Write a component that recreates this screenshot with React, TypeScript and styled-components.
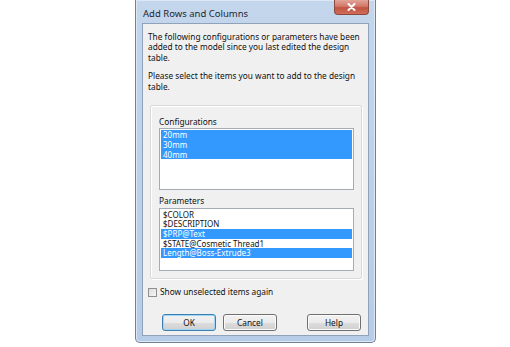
import styled, { createGlobalStyle } from 'styled-components';

const GlobalStyle = createGlobalStyle`
  html, body {
    margin: 0;
    padding: 0;
    background: #ffffff;
  }
  body {
    font-family: 'Noto Sans', 'Open Sans', sans-serif;
    color: #111111;
  }
`;

const configurations = [
  { label: '20mm', selected: true },
  { label: '30mm', selected: true },
  { label: '40mm', selected: true },
];

const parameters = [
  { label: '$COLOR', selected: false },
  { label: '$DESCRIPTION', selected: false },
  { label: '$PRP@Text', selected: true },
  { label: '$STATE@Cosmetic Thread1', selected: false },
  { label: 'Length@Boss-Extrude3', selected: true },
];

const App = () => {
  return (
    <Stage>
      <GlobalStyle />
      <Window>
        <TitleBar>
          <Title>Add Rows and Columns</Title>
          <CloseBtn type='button' aria-label='Close'>
            <svg width='9' height='8' viewBox='0 0 9 8'>
              <path d='M1.5 1 L7.5 7 M7.5 1 L1.5 7' stroke='#ffffff' strokeWidth='2' strokeLinecap='round' />
            </svg>
          </CloseBtn>
        </TitleBar>
        <Client>
          <Message>
            The following configurations or parameters have been added to the model since you last edited the design
            table.
          </Message>
          <Message>Please select the items you want to add to the design table.</Message>
          <GroupBox>
            <ListLabel>Configurations</ListLabel>
            <ListBox $height={62}>
              {configurations.map((item) => (
                <ListItem key={item.label} $selected={item.selected}>
                  {item.label}
                </ListItem>
              ))}
            </ListBox>
            <ListLabel>Parameters</ListLabel>
            <ListBox $height={63}>
              {parameters.map((item) => (
                <ListItem key={item.label} $selected={item.selected}>
                  {item.label}
                </ListItem>
              ))}
            </ListBox>
          </GroupBox>
          <CheckRow>
            <CheckBox />
            <span>Show unselected items again</span>
          </CheckRow>
          <ButtonRow>
            <DialogBtn type='button' $focused>
              OK
            </DialogBtn>
            <DialogBtn type='button'>Cancel</DialogBtn>
            <Spacer />
            <DialogBtn type='button'>Help</DialogBtn>
          </ButtonRow>
        </Client>
      </Window>
    </Stage>
  );
};

const Stage = styled.div`
  width: 510px;
  height: 347px;
  padding-left: 135px;
  box-sizing: border-box;
`;

const Window = styled.div`
  width: 241px;
  height: 343px;
  box-sizing: border-box;
  display: flex;
  flex-direction: column;
  padding: 0 6px 6px;
  border: 1px solid #6f7f95;
  border-top: none;
  border-radius: 0 0 5px 5px;
  background: linear-gradient(180deg, #c4d6ec 0%, #bed2ea 40%, #b7cce6 100%);
  box-shadow: inset 0 0 0 1px #dde8f5;
`;

const TitleBar = styled.div`
  height: 23px;
  display: flex;
  align-items: flex-start;
  justify-content: space-between;
`;

const Title = styled.span`
  margin-top: 7px;
  padding-left: 1px;
  font-size: 9.5px;
  color: #1e2630;
`;

const CloseBtn = styled.button`
  width: 35px;
  height: 15px;
  margin-right: 0;
  padding: 0;
  display: flex;
  align-items: center;
  justify-content: center;
  border: 1px solid #8a4a42;
  border-top: none;
  border-radius: 0 0 4px 4px;
  background: linear-gradient(180deg, #e2a496 0%, #d2786a 45%, #c25443 55%, #cf6c58 100%);
`;

const Client = styled.div`
  flex: 1;
  display: flex;
  flex-direction: column;
  padding: 8px 6px 0 5px;
  background: #f0f0f0;
  border: 1px solid #8ea2bb;
  font-size: 8.3px;
  line-height: 10.4px;
`;

const Message = styled.p`
  margin: 0 0 8px;
  width: 214px;
`;

const GroupBox = styled.div`
  margin: 5px 0 0 2px;
  height: 174px;
  box-sizing: border-box;
  padding: 11px 7px 0 8px;
  border: 1px solid #d9d9d9;
  border-radius: 2px;
  box-shadow: inset 1px 1px 0 #ffffff, 1px 1px 0 #ffffff;
`;

const ListLabel = styled.div`
  margin-bottom: 1px;
`;

const ListBox = styled.div<{ $height: number }>`
  height: ${({ $height }) => $height}px;
  box-sizing: border-box;
  margin-bottom: 6px;
  padding: 1px;
  background: #ffffff;
  border: 1px solid #a5acb5;
  font-size: 8px;
  line-height: 9.6px;
`;

const ListItem = styled.div<{ $selected?: boolean }>`
  padding-left: 2px;
  color: ${({ $selected }) => ($selected ? '#ffffff' : '#111111')};
  background: ${({ $selected }) => ($selected ? '#3399ff' : 'transparent')};
  white-space: nowrap;
`;

const CheckRow = styled.label`
  display: flex;
  align-items: center;
  gap: 3px;
  margin-top: 8px;
`;

const CheckBox = styled.span`
  width: 9px;
  height: 9px;
  box-sizing: border-box;
  border: 1px solid #8f8f8f;
  background: linear-gradient(135deg, #dcdcdc 0%, #f6f6f6 100%);
`;

const ButtonRow = styled.div`
  display: flex;
  gap: 7px;
  margin-top: 17px;
  padding-left: 14px;
  padding-right: 1px;
`;

const Spacer = styled.div`
  flex: 1;
`;

const DialogBtn = styled.button<{ $focused?: boolean }>`
  width: 54px;
  height: 17px;
  padding: 0;
  font-family: inherit;
  font-size: 8.3px;
  color: #111111;
  border-radius: 3px;
  border: 1px solid ${({ $focused }) => ($focused ? '#3c7fb1' : '#707070')};
  background: linear-gradient(180deg, #f2f2f2 0%, #ebebeb 50%, #dddddd 51%, #cfcfcf 100%);
  box-shadow: inset 0 0 0 1px ${({ $focused }) => ($focused ? '#9fd5f5' : '#fbfbfb')};
`;

export default App;
